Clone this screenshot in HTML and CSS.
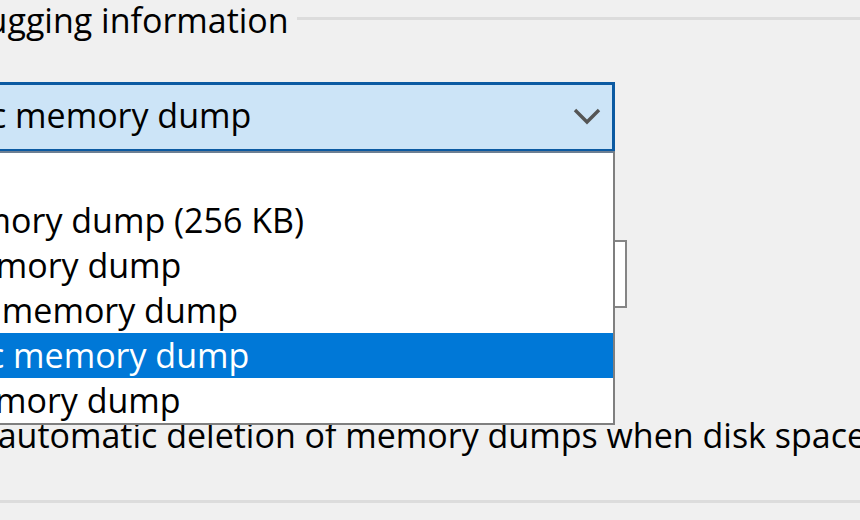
FILE: index.html
```html
<!DOCTYPE html>
<html lang="en">
<head>
<meta charset="utf-8">
<title>Startup and Recovery</title>
<link rel="stylesheet" href="styles.css">
</head>
<body>
<div class="dialog">
  <div class="group-head">
    <span class="group-label">Debugging information</span>
    <span class="group-rule"></span>
  </div>
  <div class="combo-wrap">
    <div class="combo">
      <span class="combo-text">Automatic memory dump</span>
      <svg class="chevron" width="28" height="18" viewBox="0 0 28 18"><polyline points="2,3 14,15 26,3" fill="none" stroke="#555" stroke-width="3.4"/></svg>
    </div>
    <ul class="list">
      <li class="item">(none)</li>
      <li class="item item--small">Small memory dump (256 KB)</li>
      <li class="item item--kernel">Kernel memory dump</li>
      <li class="item item--complete">Complete memory dump</li>
      <li class="item selected">Automatic memory dump</li>
      <li class="item item--active">Active memory dump</li>
    </ul>
  </div>
  <div class="textbox"></div>
  <div class="check-label">Disable automatic deletion of memory dumps when disk space is low</div>
  <div class="group-bottom"></div>
</div>
</body>
</html>
```

FILE: styles.css
```css
html, body {
  margin: 0;
  padding: 0;
}
body {
  background: #f0f0f0;
  width: 860px;
  height: 520px;
  overflow: hidden;
  font-family: "Open Sans", "Noto Sans", sans-serif;
  font-size: 34px;
  color: #000;
}
.dialog {
  margin-left: -400px;
  width: 1400px;
}
.group-head {
  display: flex;
  height: 40px;
  padding-left: 322px;
}
.group-label {
  line-height: 40px;
  white-space: nowrap;
}
.group-rule {
  flex: 1;
  height: 3px;
  margin-top: 17px;
  margin-left: 8px;
  background: #dcdcdc;
}
.combo-wrap {
  position: relative;
  margin-top: 42px;
  margin-left: 100px;
  width: 915px;
}
.combo {
  box-sizing: border-box;
  height: 70px;
  border: 3px solid #0b5aa2;
  background: #cce4f7;
  display: flex;
  align-items: center;
  padding-left: 141px;
  padding-right: 11px;
}
.combo-text {
  flex: 1;
  line-height: 60px;
  padding-bottom: 4px;
  white-space: nowrap;
}
.chevron {
  display: block;
  margin-top: -2px;
}
.list {
  position: absolute;
  left: 0;
  right: 0;
  top: 69px;
  margin: 0;
  padding: 0;
  list-style: none;
  background: #fff;
  border-top: 2px solid #6d7f93;
  border-right: 2px solid #7f7f7f;
  border-bottom: 2px solid #7f7f7f;
  border-left: 2px solid #7f7f7f;
  z-index: 2;
}
.item {
  height: 45px;
  line-height: 45px;
  padding-left: 140px;
  white-space: nowrap;
}
.item--small,
.item--kernel {
  padding-left: 132px;
}
.item--complete {
  padding-left: 138px;
}
.item--active {
  padding-left: 139px;
}
.item.selected {
  background: #0078d7;
  color: #fff;
}
.textbox {
  box-sizing: border-box;
  margin-top: 88px;
  margin-left: 100px;
  width: 927px;
  height: 68px;
  border: 2px solid #858585;
  background: #fff;
}
.check-label {
  margin-top: 115px;
  padding-left: 272px;
  line-height: 24px;
  white-space: nowrap;
}
.group-bottom {
  margin-top: 53px;
  height: 3px;
  background: #dcdcdc;
}
```
